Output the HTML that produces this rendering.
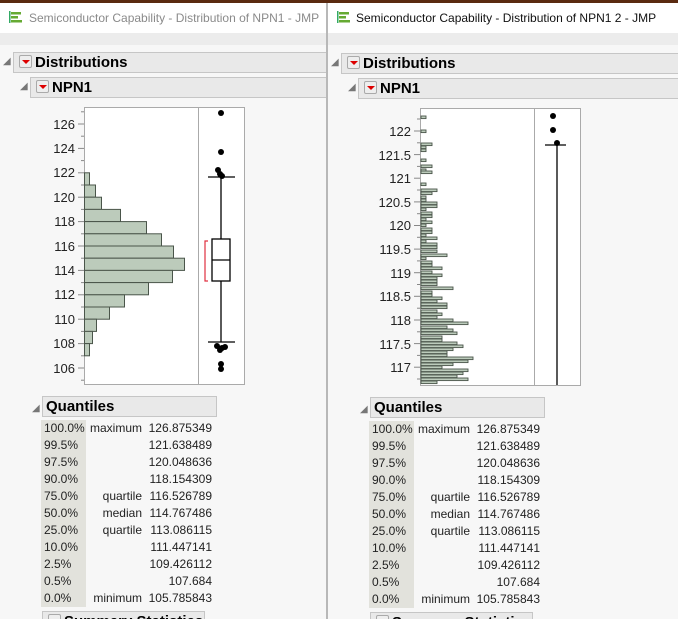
<!DOCTYPE html>
<html><head><meta charset="utf-8"><style>
*{margin:0;padding:0;box-sizing:border-box}
body{width:678px;height:619px;overflow:hidden;background:#f7f7f7;font-family:"Liberation Sans",sans-serif;position:relative}
.win{position:absolute;top:3px;height:616px;background:#f7f7f7;overflow:hidden}
.tb{position:absolute;left:0;top:0;right:0;height:30px;background:#fff}
.band{position:absolute;left:0;right:0;top:30px;height:12px;background:#ececec}
.tt{position:absolute;top:8px;font-size:12px;white-space:nowrap}
.hdr{position:absolute;height:21px;background:#e9e9e9;border:1px solid #c6c6c6;font-weight:bold;font-size:15px;line-height:19px}
.tri{position:absolute;font-size:10px;color:#777}
.rb{display:inline-block;width:13px;height:13px;border:1px solid #aaa;background:#eee;border-radius:2px;vertical-align:-1px;margin:0 3px 0 5px;position:relative}
.rb:after{content:"";position:absolute;left:2px;top:4px;border-left:4px solid transparent;border-right:4px solid transparent;border-top:4px solid #d00}
.q{position:absolute;font-size:12px;color:#222}
.q div{height:17px;line-height:17px;position:relative}
.q span{position:absolute}
</style></head><body>
<div style="position:absolute;left:0;top:0;width:678px;height:3px;background:#5a2a10"></div>

<!-- LEFT WINDOW -->
<div class="win" style="left:0;width:327px">
 <div class="tb"></div><div class="band"></div>
 <svg style="position:absolute;left:9px;top:8px" width="14" height="12"><rect x="0" y="0" width="1.5" height="12" fill="#3a6"/><rect x="2" y="1" width="10" height="2.5" fill="#6a3"/><rect x="2" y="5" width="7" height="2.5" fill="#6a3"/><rect x="2" y="9" width="11" height="2.5" fill="#6a3"/></svg>
 <div class="tt" style="left:29px;color:#8a8a8a">Semiconductor Capability - Distribution of NPN1 - JMP</div>
 <div class="tri" style="left:3px;top:53px">◢</div>
 <div class="hdr" style="left:13px;top:49px;width:330px"><span class="rb"></span>Distributions</div>
 <div class="tri" style="left:20px;top:78px">◢</div>
 <div class="hdr" style="left:30px;top:74px;width:310px"><span class="rb"></span>NPN1</div>
 <svg style="position:absolute;left:0;top:-3px" width="327" height="400" font-family="Liberation Sans" font-size="13" fill="#222">
  <rect x="84.5" y="107.5" width="160" height="277" fill="#fff" stroke="#aaa"/>
  <line x1="198.5" y1="107" x2="198.5" y2="385" stroke="#aaa"/>
  <g stroke="#888">
   <line x1="78" y1="124" x2="84" y2="124"/><line x1="78" y1="148.4" x2="84" y2="148.4"/><line x1="78" y1="172.8" x2="84" y2="172.8"/><line x1="78" y1="197.2" x2="84" y2="197.2"/><line x1="78" y1="221.6" x2="84" y2="221.6"/><line x1="78" y1="246" x2="84" y2="246"/><line x1="78" y1="270.4" x2="84" y2="270.4"/><line x1="78" y1="294.8" x2="84" y2="294.8"/><line x1="78" y1="319.2" x2="84" y2="319.2"/><line x1="78" y1="343.6" x2="84" y2="343.6"/><line x1="78" y1="368" x2="84" y2="368"/>
   <line x1="81" y1="111.8" x2="84" y2="111.8"/><line x1="81" y1="136.2" x2="84" y2="136.2"/><line x1="81" y1="160.6" x2="84" y2="160.6"/><line x1="81" y1="185" x2="84" y2="185"/><line x1="81" y1="209.4" x2="84" y2="209.4"/><line x1="81" y1="233.8" x2="84" y2="233.8"/><line x1="81" y1="258.2" x2="84" y2="258.2"/><line x1="81" y1="282.6" x2="84" y2="282.6"/><line x1="81" y1="307" x2="84" y2="307"/><line x1="81" y1="331.4" x2="84" y2="331.4"/><line x1="81" y1="355.8" x2="84" y2="355.8"/><line x1="81" y1="380.2" x2="84" y2="380.2"/>
  </g>
  <g text-anchor="end">
   <text x="75" y="129">126</text><text x="75" y="153">124</text><text x="75" y="177">122</text><text x="75" y="202">120</text><text x="75" y="226">118</text><text x="75" y="251">116</text><text x="75" y="275">114</text><text x="75" y="299">112</text><text x="75" y="324">110</text><text x="75" y="348">108</text><text x="75" y="373">106</text>
  </g>
  <g fill="#bccbbb" stroke="#4a554a" stroke-width="1">
   <rect x="84.5" y="172.8" width="5" height="12.2"/><rect x="84.5" y="185" width="11" height="12.2"/><rect x="84.5" y="197.2" width="17" height="12.2"/><rect x="84.5" y="209.4" width="36" height="12.2"/><rect x="84.5" y="221.6" width="62" height="12.2"/><rect x="84.5" y="233.8" width="77" height="12.2"/><rect x="84.5" y="246" width="89" height="12.2"/><rect x="84.5" y="258.2" width="100" height="12.2"/><rect x="84.5" y="270.4" width="88" height="12.2"/><rect x="84.5" y="282.6" width="64" height="12.2"/><rect x="84.5" y="294.8" width="40" height="12.2"/><rect x="84.5" y="307" width="25" height="12.2"/><rect x="84.5" y="319.2" width="12" height="12.2"/><rect x="84.5" y="331.4" width="8" height="12.2"/><rect x="84.5" y="343.6" width="5" height="12.2"/>
  </g>
  <g stroke="#000" stroke-width="1.3" fill="none">
   <line x1="221" y1="177" x2="221" y2="239"/><line x1="221" y1="281" x2="221" y2="342"/>
   <line x1="208" y1="177" x2="235" y2="177"/><line x1="208" y1="342" x2="235" y2="342"/>
   <rect x="212" y="239" width="18" height="42" fill="#fff"/><line x1="212" y1="260" x2="230" y2="260"/>
  </g>
  <path d="M208 241H205V281H208" stroke="#e03040" fill="none" stroke-width="1.2"/>
  <g fill="#000"><circle cx="221" cy="113" r="3"/><circle cx="221" cy="152" r="3"/><circle cx="218" cy="170" r="3"/><circle cx="220" cy="174" r="3"/><circle cx="222" cy="176" r="3"/><circle cx="217" cy="346" r="3"/><circle cx="222" cy="348" r="3"/><circle cx="225" cy="347" r="3"/><circle cx="220" cy="350" r="3"/><circle cx="221" cy="364" r="3"/><circle cx="221" cy="369" r="3"/></g>
 </svg>
 <div class="tri" style="left:32px;top:400px">◢</div>
 <div class="hdr" style="left:42px;top:393px;width:175px;padding-left:3px">Quantiles</div>
 <div style="position:absolute;left:41px;top:417px;width:45px;height:187px;background:#e2e2dc"></div>
 <div class="q" style="left:44px;top:417px;width:170px">
  <div>100.0%<span style="right:72px">maximum</span><span style="right:2px">126.875349</span></div>
  <div>99.5%<span style="right:2px">121.638489</span></div>
  <div>97.5%<span style="right:2px">120.048636</span></div>
  <div>90.0%<span style="right:2px">118.154309</span></div>
  <div>75.0%<span style="right:72px">quartile</span><span style="right:2px">116.526789</span></div>
  <div>50.0%<span style="right:72px">median</span><span style="right:2px">114.767486</span></div>
  <div>25.0%<span style="right:72px">quartile</span><span style="right:2px">113.086115</span></div>
  <div>10.0%<span style="right:2px">111.447141</span></div>
  <div>2.5%<span style="right:2px">109.426112</span></div>
  <div>0.5%<span style="right:2px">107.684</span></div>
  <div>0.0%<span style="right:72px">minimum</span><span style="right:2px">105.785843</span></div>
 </div>
 <div class="hdr" style="left:42px;top:608px;width:163px"><span class="rb"></span>Summary Statistics</div>
</div>
<div style="position:absolute;left:326px;top:3px;width:2px;height:616px;background:#b8b8b8"></div>

<!-- RIGHT WINDOW -->
<div class="win" style="left:328px;width:350px">
 <div class="tb"></div><div class="band"></div>
 <svg style="position:absolute;left:9px;top:8px" width="14" height="12"><rect x="0" y="0" width="1.5" height="12" fill="#3a6"/><rect x="2" y="1" width="10" height="2.5" fill="#6a3"/><rect x="2" y="5" width="7" height="2.5" fill="#6a3"/><rect x="2" y="9" width="11" height="2.5" fill="#6a3"/></svg>
 <div class="tt" style="left:28px;color:#111">Semiconductor Capability - Distribution of NPN1 2 - JMP</div>
 <div class="tri" style="left:3px;top:54px">◢</div>
 <div class="hdr" style="left:13px;top:50px;width:340px"><span class="rb"></span>Distributions</div>
 <div class="tri" style="left:20px;top:79px">◢</div>
 <div class="hdr" style="left:30px;top:75px;width:330px"><span class="rb"></span>NPN1</div>
 <svg style="position:absolute;left:-328px;top:-3px" width="678" height="400" font-family="Liberation Sans" font-size="13" fill="#222">
  <rect x="420.5" y="108.5" width="160" height="277" fill="#fff" stroke="#aaa"/>
  <line x1="534.5" y1="108" x2="534.5" y2="386" stroke="#aaa"/>
  <g stroke="#888">
   <line x1="414" y1="131" x2="420" y2="131"/><line x1="414" y1="154.6" x2="420" y2="154.6"/><line x1="414" y1="178.2" x2="420" y2="178.2"/><line x1="414" y1="201.9" x2="420" y2="201.9"/><line x1="414" y1="225.5" x2="420" y2="225.5"/><line x1="414" y1="249.1" x2="420" y2="249.1"/><line x1="414" y1="272.7" x2="420" y2="272.7"/><line x1="414" y1="296.3" x2="420" y2="296.3"/><line x1="414" y1="320" x2="420" y2="320"/><line x1="414" y1="343.6" x2="420" y2="343.6"/><line x1="414" y1="367.2" x2="420" y2="367.2"/>
   <line x1="417" y1="119" x2="420" y2="119"/><line x1="417" y1="142.8" x2="420" y2="142.8"/><line x1="417" y1="166.4" x2="420" y2="166.4"/><line x1="417" y1="190" x2="420" y2="190"/><line x1="417" y1="213.7" x2="420" y2="213.7"/><line x1="417" y1="237.3" x2="420" y2="237.3"/><line x1="417" y1="260.9" x2="420" y2="260.9"/><line x1="417" y1="284.5" x2="420" y2="284.5"/><line x1="417" y1="308.2" x2="420" y2="308.2"/><line x1="417" y1="331.8" x2="420" y2="331.8"/><line x1="417" y1="355.4" x2="420" y2="355.4"/><line x1="417" y1="379" x2="420" y2="379"/>
  </g>
  <g text-anchor="end">
   <text x="411" y="136">122</text><text x="411" y="160">121.5</text><text x="411" y="183">121</text><text x="411" y="207">120.5</text><text x="411" y="230">120</text><text x="411" y="254">119.5</text><text x="411" y="278">119</text><text x="411" y="301">118.5</text><text x="411" y="325">118</text><text x="411" y="349">117.5</text><text x="411" y="372">117</text>
  </g>
  <g fill="#bccbbb" stroke="#4a554a" stroke-width="0.9">
   <rect x="421" y="116" width="5" height="2.6"/><rect x="421" y="130" width="5" height="2.6"/><rect x="421" y="143" width="11" height="2.6"/><rect x="421" y="146" width="5" height="2.6"/><rect x="421" y="149" width="5" height="2.6"/><rect x="421" y="159" width="5" height="2.6"/><rect x="421" y="165" width="11" height="2.6"/><rect x="421" y="169" width="5" height="2.6"/><rect x="421" y="171" width="11" height="2.6"/><rect x="421" y="183" width="5" height="2.6"/><rect x="421" y="189" width="16" height="2.6"/><rect x="421" y="192" width="11" height="2.6"/><rect x="421" y="196" width="5" height="2.6"/><rect x="421" y="199" width="5" height="2.6"/><rect x="421" y="202" width="16" height="2.6"/><rect x="421" y="205" width="16" height="2.6"/><rect x="421" y="208" width="5" height="2.6"/><rect x="421" y="212" width="11" height="2.6"/><rect x="421" y="215" width="11" height="2.6"/><rect x="421" y="218" width="5" height="2.6"/><rect x="421" y="221" width="11" height="2.6"/><rect x="421" y="224" width="5" height="2.6"/><rect x="421" y="228" width="11" height="2.6"/><rect x="421" y="231" width="11" height="2.6"/><rect x="421" y="234" width="5" height="2.6"/><rect x="421" y="237" width="16" height="2.6"/><rect x="421" y="240" width="5" height="2.6"/><rect x="421" y="243" width="16" height="2.6"/><rect x="421" y="246" width="16" height="2.6"/><rect x="421" y="250" width="16" height="2.6"/><rect x="421" y="254" width="26" height="2.6"/><rect x="421" y="257" width="5" height="2.6"/><rect x="421" y="261" width="11" height="2.6"/><rect x="421" y="264" width="11" height="2.6"/><rect x="421" y="267" width="21" height="2.6"/><rect x="421" y="271" width="11" height="2.6"/><rect x="421" y="274" width="21" height="2.6"/><rect x="421" y="277" width="16" height="2.6"/><rect x="421" y="280" width="16" height="2.6"/><rect x="421" y="283" width="16" height="2.6"/><rect x="421" y="287" width="32" height="2.6"/><rect x="421" y="291" width="11" height="2.6"/><rect x="421" y="294" width="11" height="2.6"/><rect x="421" y="297" width="21" height="2.6"/><rect x="421" y="300" width="16" height="2.6"/><rect x="421" y="303" width="26" height="2.6"/><rect x="421" y="306" width="26" height="2.6"/><rect x="421" y="310" width="16" height="2.6"/><rect x="421" y="313" width="21" height="2.6"/><rect x="421" y="316" width="16" height="2.6"/><rect x="421" y="319" width="32" height="2.6"/><rect x="421" y="322" width="47" height="2.6"/><rect x="421" y="326" width="26" height="2.6"/><rect x="421" y="329" width="32" height="2.6"/><rect x="421" y="332" width="36" height="2.6"/><rect x="421" y="336" width="21" height="2.6"/><rect x="421" y="339" width="21" height="2.6"/><rect x="421" y="342" width="36" height="2.6"/><rect x="421" y="345" width="42" height="2.6"/><rect x="421" y="348" width="32" height="2.6"/><rect x="421" y="351" width="26" height="2.6"/><rect x="421" y="354" width="26" height="2.6"/><rect x="421" y="357" width="52" height="2.6"/><rect x="421" y="360" width="47" height="2.6"/><rect x="421" y="363" width="32" height="2.6"/><rect x="421" y="366" width="21" height="2.6"/><rect x="421" y="369" width="47" height="2.6"/><rect x="421" y="372" width="42" height="2.6"/><rect x="421" y="375" width="36" height="2.6"/><rect x="421" y="378" width="47" height="2.6"/><rect x="421" y="381" width="16" height="2.6"/>
  </g>
  <line x1="557" y1="145" x2="557" y2="385" stroke="#000" stroke-width="1.3"/>
  <line x1="545" y1="145" x2="566" y2="145" stroke="#000" stroke-width="1.3"/>
  <g fill="#000"><circle cx="553" cy="116" r="3"/><circle cx="553" cy="130" r="3"/><circle cx="557" cy="143" r="3"/></g>
 </svg>
 <div class="tri" style="left:32px;top:401px">◢</div>
 <div class="hdr" style="left:42px;top:394px;width:175px;padding-left:3px">Quantiles</div>
 <div style="position:absolute;left:41px;top:418px;width:45px;height:187px;background:#e2e2dc"></div>
 <div class="q" style="left:44px;top:418px;width:170px">
  <div>100.0%<span style="right:72px">maximum</span><span style="right:2px">126.875349</span></div>
  <div>99.5%<span style="right:2px">121.638489</span></div>
  <div>97.5%<span style="right:2px">120.048636</span></div>
  <div>90.0%<span style="right:2px">118.154309</span></div>
  <div>75.0%<span style="right:72px">quartile</span><span style="right:2px">116.526789</span></div>
  <div>50.0%<span style="right:72px">median</span><span style="right:2px">114.767486</span></div>
  <div>25.0%<span style="right:72px">quartile</span><span style="right:2px">113.086115</span></div>
  <div>10.0%<span style="right:2px">111.447141</span></div>
  <div>2.5%<span style="right:2px">109.426112</span></div>
  <div>0.5%<span style="right:2px">107.684</span></div>
  <div>0.0%<span style="right:72px">minimum</span><span style="right:2px">105.785843</span></div>
 </div>
 <div class="hdr" style="left:42px;top:609px;width:163px"><span class="rb"></span>Summary Statistics</div>
</div>
</body></html>
